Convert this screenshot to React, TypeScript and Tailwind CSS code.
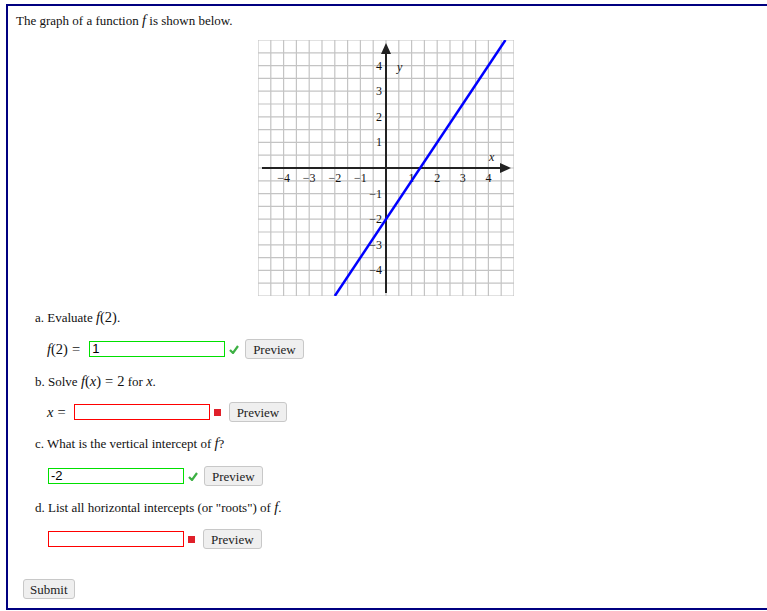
import React from 'react'

const serif = { fontFamily: '"Liberation Serif", "Times New Roman", serif' }

function Graph() {
  const u = 25.6
  const lines = Array.from({ length: 21 }, (_, i) => i * 12.8)
  const xs = [-4, -3, -2, -1, 1, 2, 3, 4]
  return (
    <svg width="256" height="256" viewBox="0 0 256 256" style={serif}>
      {lines.map((p) => (
        <g key={p}>
          <line x1={p} y1={0} x2={p} y2={256} stroke="#c4c4c4" strokeWidth="1.2" />
          <line x1={0} y1={p} x2={256} y2={p} stroke="#c4c4c4" strokeWidth="1.2" />
        </g>
      ))}
      <line x1={128} y1={253} x2={128} y2={10} stroke="#222" strokeWidth="2" />
      <polygon points="128,3 123,14 133,14" fill="#222" />
      <line x1={4} y1={128} x2={246} y2={128} stroke="#222" strokeWidth="2" />
      <polygon points="253,128 242,123 242,133" fill="#222" />
      {xs.map((n) => (
        <text key={'x' + n} x={128 + n * u} y={142} fontSize="12" textAnchor="middle" fill="#111">
          {n < 0 ? '\u2212' + -n : n}
        </text>
      ))}
      {xs.map((n) => (
        <text key={'y' + n} x={124} y={128 - n * u + 4} fontSize="12" textAnchor="end" fill="#111">
          {n < 0 ? '\u2212' + -n : n}
        </text>
      ))}
      <text x={139} y={31} fontSize="12" fontStyle="italic" fill="#111">y</text>
      <text x={231} y={121} fontSize="12" fontStyle="italic" fill="#111">x</text>
      <line x1={128 - 2 * u} y1={256} x2={128 + (14 / 3) * u} y2={0} stroke="#0000ff" strokeWidth="2.5" />
    </svg>
  )
}

function Check() {
  return (
    <svg width="10" height="9" viewBox="0 0 10 9" className="mx-[4px]">
      <path d="M1 5 L4 8 L9 1" stroke="#3cb043" strokeWidth="2.2" fill="none" />
    </svg>
  )
}

function Cross() {
  return <span className="inline-block w-[7px] h-[7px] bg-[#e0202a] ml-[4px] mr-[5px]" />
}

function PreviewBtn({ ml }: { ml: string }) {
  return (
    <button
      className={`${ml} h-[20px] px-[7px] bg-[#efefef] border border-[#c8c8c8] rounded-[3px] text-[13px] text-[#222] leading-none`}
      style={serif}
    >
      Preview
    </button>
  )
}

function Field({ w, ok, value }: { w: string; ok: boolean; value?: string }) {
  return (
    <div
      className={`${w} h-[16px] border ${ok ? 'border-[#00e000]' : 'border-[#ff0000]'} bg-white text-[13px] leading-[14px] pl-[2px] text-black`}
      style={{ fontFamily: '"Liberation Sans", Arial, sans-serif' }}
    >
      {value}
    </div>
  )
}

const I = ({ children }: { children: React.ReactNode }) => <i>{children}</i>

// MathJax-style inline math: a touch larger than body text, spaced equals
const M = ({ children }: { children: React.ReactNode }) => (
  <span className="text-[14.5px]">{children}</span>
)
const Eq = () => <span className="mx-[4px]">=</span>

export default function App() {
  return (
    <div className="bg-white w-[767px] h-[611px] overflow-hidden text-[13px] text-[#111]" style={serif}>
      <div className="ml-[6px] mt-[4px] w-[800px] h-[606px] border-2 border-[#000080] pl-[8px] pt-[5px]">
        <p className="h-[18px] leading-[18px]">
          The graph of a function <M><I>f</I></M> is shown below.
        </p>
        <div className="flex mt-[11px] ml-[242px]">
          <Graph />
        </div>
        <div className="ml-[19px] mt-[12px]">
          <p className="h-[18px] leading-[18px]">
            a. Evaluate <M><I>f</I>(2)</M>.
          </p>
          <div className="flex items-center h-[20px] leading-[18px] ml-[12px] mt-[13px]">
            <M>
              <I>f</I>(2)
              <Eq />
            </M>
            <span className="w-[5px]" />
            <Field w="w-[136px]" ok value="1" />
            <Check />
            <PreviewBtn ml="ml-[2px]" />
          </div>
          <p className="h-[18px] leading-[18px] mt-[13px]">
            b. Solve <M><I>f</I>(<I>x</I>)<Eq />2</M> for <M><I>x</I></M>.
          </p>
          <div className="flex items-center h-[20px] leading-[18px] ml-[12px] mt-[12px]">
            <M>
              <I>x</I>
              <Eq />
            </M>
            <span className="w-[4px]" />
            <Field w="w-[136px]" ok={false} />
            <Cross />
            <PreviewBtn ml="ml-[3px]" />
          </div>
          <p className="h-[18px] leading-[18px] mt-[12px]">
            c. What is the vertical intercept of <M><I>f</I></M>?
          </p>
          <div className="flex items-center h-[20px] leading-[18px] ml-[13px] mt-[14px]">
            <Field w="w-[136px]" ok value="-2" />
            <Check />
            <PreviewBtn ml="ml-[2px]" />
          </div>
          <p className="h-[18px] leading-[18px] mt-[12px]">
            d. List all horizontal intercepts (or "roots") of <M><I>f</I></M>.
          </p>
          <div className="flex items-center h-[20px] leading-[18px] ml-[13px] mt-[13px]">
            <Field w="w-[136px]" ok={false} />
            <Cross />
            <PreviewBtn ml="ml-[3px]" />
          </div>
        </div>
        <button
          className="block mt-[30px] ml-[7px] h-[20px] px-[6px] bg-[#efefef] border border-[#c8c8c8] rounded-[3px] text-[13px] text-[#222] leading-none"
          style={serif}
        >
          Submit
        </button>
      </div>
    </div>
  )
}
